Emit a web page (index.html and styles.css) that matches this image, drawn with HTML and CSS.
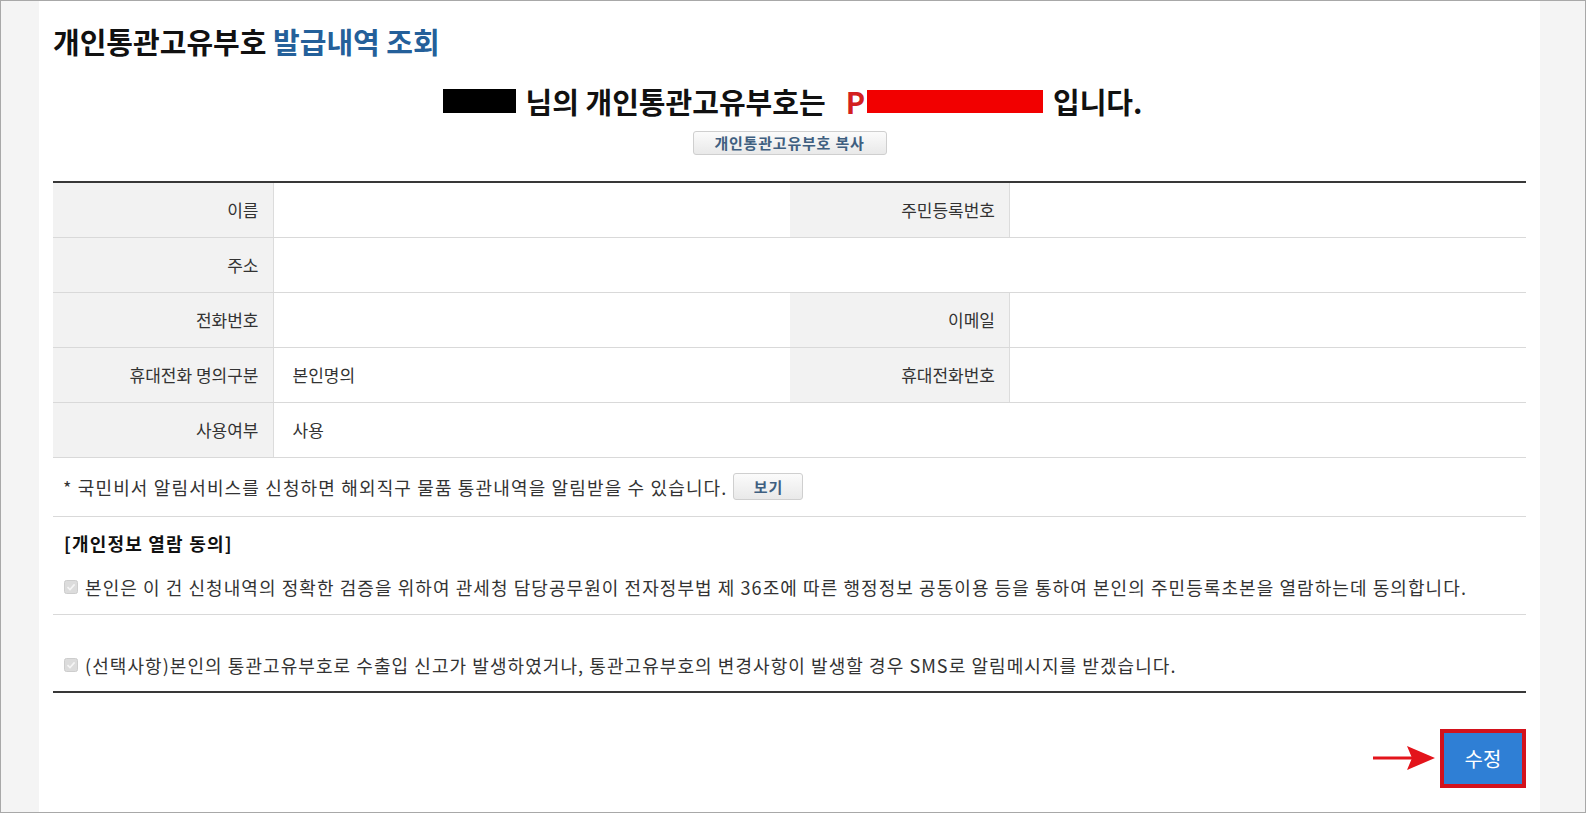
FILE: index.html
```html
<!DOCTYPE html>
<html>
<head>
<title>개인통관고유부호 발급내역 조회</title>
<meta content="width=device-width, initial-scale=1" name="viewport" />
<link rel="stylesheet" href="styles.css">
</head>
<body>
<div class='frame'>
  <div class='page'>
    <h1 class='title'>개인통관고유부호 <span class='title-blue'>발급내역 조회</span></h1>

    <div class='result'>
      <span class='mask-black'></span>
      <span class='result-txt'>님의 개인통관고유부호는</span>
      <span class='result-p'>P</span><span class='mask-red'></span>
      <span class='result-txt'>입니다.</span>
    </div>
    <div class='copy-wrap'>
      <button class='btn-small btn-copy'>개인통관고유부호 복사</button>
    </div>

    <table class='info'>
      <tr>
        <th>이름</th><td></td>
        <th>주민등록번호</th><td></td>
      </tr>
      <tr>
        <th>주소</th><td colspan='3'></td>
      </tr>
      <tr>
        <th>전화번호</th><td></td>
        <th>이메일</th><td></td>
      </tr>
      <tr>
        <th>휴대전화 명의구분</th><td>본인명의</td>
        <th>휴대전화번호</th><td></td>
      </tr>
      <tr>
        <th>사용여부</th><td colspan='3'>사용</td>
      </tr>
    </table>

    <div class='note'>
      * 국민비서 알림서비스를 신청하면 해외직구 물품 통관내역을 알림받을 수 있습니다.
      <button class='btn-small btn-view'>보기</button>
    </div>

    <div class='consent'>
      <div class='consent-hdr'>[개인정보 열람 동의]</div>
      <div class='chk-row'>
        <span class='chk'><svg width="14" height="14" viewBox="0 0 14 14"><rect x="0.5" y="0.5" width="13" height="13" rx="2" fill="#dcdcdc" stroke="#cdcdcd"/><path d="M3.5 7.2 L6 9.6 L10.6 4.4" fill="none" stroke="#f5f5f5" stroke-width="1.6"/></svg></span>
        본인은 이 건 신청내역의 정확한 검증을 위하여 관세청 담당공무원이 전자정부법 제 36조에 따른 행정정보 공동이용 등을 통하여 본인의 주민등록초본을 열람하는데 동의합니다.
      </div>
    </div>
    <div class='consent consent-last'>
      <div class='chk-row'>
        <span class='chk'><svg width="14" height="14" viewBox="0 0 14 14"><rect x="0.5" y="0.5" width="13" height="13" rx="2" fill="#dcdcdc" stroke="#cdcdcd"/><path d="M3.5 7.2 L6 9.6 L10.6 4.4" fill="none" stroke="#f5f5f5" stroke-width="1.6"/></svg></span>
        (선택사항)본인의 통관고유부호로 수출입 신고가 발생하였거나, 통관고유부호의 변경사항이 발생할 경우 SMS로 알림메시지를 받겠습니다.
      </div>
    </div>

    <div class='foot'>
      <svg class='arrow' width="62" height="26" viewBox="0 0 62 26"><line x1="0" y1="13" x2="40" y2="13" stroke="#e3141b" stroke-width="3"/><polygon points="34,1 62,13 34,25 39,13" fill="#e3141b"/></svg>
      <div class='mark'><button class='btn-edit'>수정</button></div>
    </div>
  </div>
</div>
</body>
</html>
```

FILE: styles.css
```css
*, body {
  margin: 0;
  padding: 0;
  box-sizing: border-box;
}
body {
  font-family: "Noto Sans CJK KR", "Noto Sans", sans-serif;
  color: #222;
}
.frame {
  width: 1586px;
  height: 813px;
  border: 1px solid #a8a8a8;
  background-color: #f4f4f4;
  padding-left: 38px;
  overflow: hidden;
}
.page {
  width: 1501px;
  height: 811px;
  background-color: #fff;
  padding: 0 14px;
}
.title {
  padding-top: 24px;
  font-size: 29px;
  line-height: 32px;
  font-weight: bold;
  color: #111;
}
.title-blue {
  color: #24609a;
}
.result {
  margin-top: 28px;
  display: flex;
  justify-content: center;
  align-items: center;
  height: 32px;
  font-size: 29px;
  font-weight: bold;
  color: #111;
  padding-left: 6px;
}
.mask-black {
  display: inline-block;
  width: 73px;
  height: 24px;
  background-color: #000;
  margin-right: 10px;
}
.mask-red {
  display: inline-block;
  width: 176px;
  height: 23px;
  background-color: #f20000;
  margin-right: 10px;
}
.result-p {
  color: #d3201f;
  margin-left: 20px;
  margin-right: 2px;
}
.copy-wrap {
  margin-top: 13px;
  text-align: center;
  height: 24px;
}
.btn-small {
  font-family: "Noto Sans CJK KR", sans-serif;
  background: linear-gradient(#fbfbfb, #e9e9e9);
  border: 1px solid #cfcfcf;
  border-radius: 3px;
  color: #3f5f80;
  font-weight: bold;
}
.btn-copy {
  width: 194px;
  height: 24px;
  font-size: 15px;
  line-height: 20px;
  letter-spacing: 0.8px;
}
.btn-view {
  width: 70px;
  height: 27px;
  font-size: 15px;
  letter-spacing: 1px;
  margin-left: 6px;
  vertical-align: middle;
}
.info {
  margin-top: 27px;
  width: 100%;
  border-collapse: collapse;
  border-top: 2px solid #383838;
  font-size: 17px;
  table-layout: fixed;
}
.info th, .info td {
  height: 55px;
  border-bottom: 1px solid #d9d9d9;
  font-weight: normal;
  color: #333;
}
.info th {
  width: 220px;
  background-color: #f2f2f2;
  text-align: right;
  padding-right: 14px;
  border-right: 1px solid #dcdcdc;
}
.info td {
  padding-left: 19px;
}
.note {
  height: 59px;
  display: flex;
  align-items: center;
  padding-left: 10px;
  font-size: 18px;
  letter-spacing: 1.15px;
  color: #333;
  border-bottom: 1px solid #d9d9d9;
}
.consent {
  border-bottom: 1px solid #d9d9d9;
  padding: 14px 10px 15px 11px;
}
.consent-last {
  border-bottom: 2px solid #383838;
  padding-top: 38px;
  padding-bottom: 14px;
}
.consent-hdr {
  font-size: 18px;
  letter-spacing: 1.2px;
  line-height: 24px;
  font-weight: bold;
  color: #111;
}
.chk-row {
  margin-top: 20px;
  font-size: 18px;
  letter-spacing: 1.07px;
  line-height: 24px;
  color: #333;
  display: flex;
  align-items: center;
}
.consent-last .chk-row {
  margin-top: 0;
}
.chk {
  display: inline-flex;
  margin-right: 7px;
}
.foot {
  display: flex;
  justify-content: flex-end;
  align-items: center;
  margin-top: 36px;
}
.arrow {
  margin-right: 5px;
}
.mark {
  border: 4px solid #d3121c;
  width: 86px;
  height: 59px;
  background-color: #b8141c;
}
.btn-edit {
  width: 78px;
  height: 51px;
  background-color: #2f7fd5;
  border: none;
  color: #fff;
  font-family: "Noto Sans CJK KR", sans-serif;
  font-size: 20px;
}
```
